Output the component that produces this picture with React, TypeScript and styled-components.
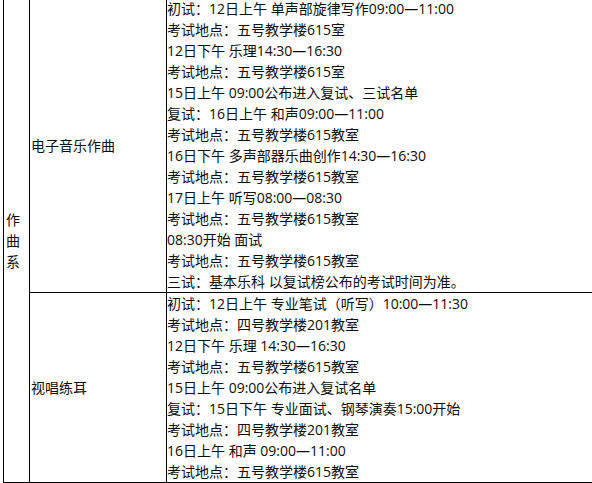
import React from "react";
import styled, { createGlobalStyle } from "styled-components";

const Global = createGlobalStyle`
  html, body {
    margin: 0;
    padding: 0;
    background: #ffffff;
    overflow: hidden;
  }
  body {
    font-family: "Open Sans", "Noto Sans CJK SC", sans-serif;
    color: #0d0d0d;
  }
`;

const Table = styled.table`
  border-collapse: collapse;
  table-layout: fixed;
  width: 640px;
  margin: -3px 0 0 3px;
  font-size: 14px;
  line-height: 21px;
`;

const Cell = styled.td<{ $pad?: number }>`
  border: 1px solid #000000;
  padding: 0 0 0 ${(p) => p.$pad ?? 0}px;
  vertical-align: middle;
  word-break: break-all;
  white-space: normal;
`;

const Line = styled.div`
  white-space: nowrap;
  height: 21px;
`;

const rows: { name: string; lines: string[] }[] = [
  {
    name: "电子音乐作曲",
    lines: [
      "初试：12日上午 单声部旋律写作09:00—11:00",
      "考试地点：五号教学楼615室",
      "12日下午 乐理14:30—16:30",
      "考试地点：五号教学楼615室",
      "15日上午 09:00公布进入复试、三试名单",
      "复试：16日上午 和声09:00—11:00",
      "考试地点：五号教学楼615教室",
      "16日下午 多声部器乐曲创作14:30—16:30",
      "考试地点：五号教学楼615教室",
      "17日上午 听写08:00—08:30",
      "考试地点：五号教学楼615教室",
      "08:30开始 面试",
      "考试地点：五号教学楼615教室",
      "三试：基本乐科 以复试榜公布的考试时间为准。",
    ],
  },
  {
    name: "视唱练耳",
    lines: [
      "初试：12日上午 专业笔试（听写）10:00—11:30",
      "考试地点：四号教学楼201教室",
      "12日下午 乐理 14:30—16:30",
      "考试地点：五号教学楼615教室",
      "15日上午 09:00公布进入复试名单",
      "复试：15日下午 专业面试、钢琴演奏15:00开始",
      "考试地点：四号教学楼201教室",
      "16日上午 和声 09:00—11:00",
      "考试地点：五号教学楼615教室",
    ],
  },
];

export default function App() {
  return (
    <>
      <Global />
      <Table>
        <colgroup>
          <col style={{ width: 26 }} />
          <col style={{ width: 137 }} />
          <col />
        </colgroup>
        <tbody>
          {rows.map((r, i) => (
            <tr key={r.name}>
              {i === 0 && (
                <Cell rowSpan={rows.length} $pad={2}>
                  作曲系
                </Cell>
              )}
              <Cell $pad={1}>{r.name}</Cell>
              <Cell>
                {r.lines.map((l, j) => (
                  <Line key={j}>{l}</Line>
                ))}
              </Cell>
            </tr>
          ))}
        </tbody>
      </Table>
    </>
  );
}
